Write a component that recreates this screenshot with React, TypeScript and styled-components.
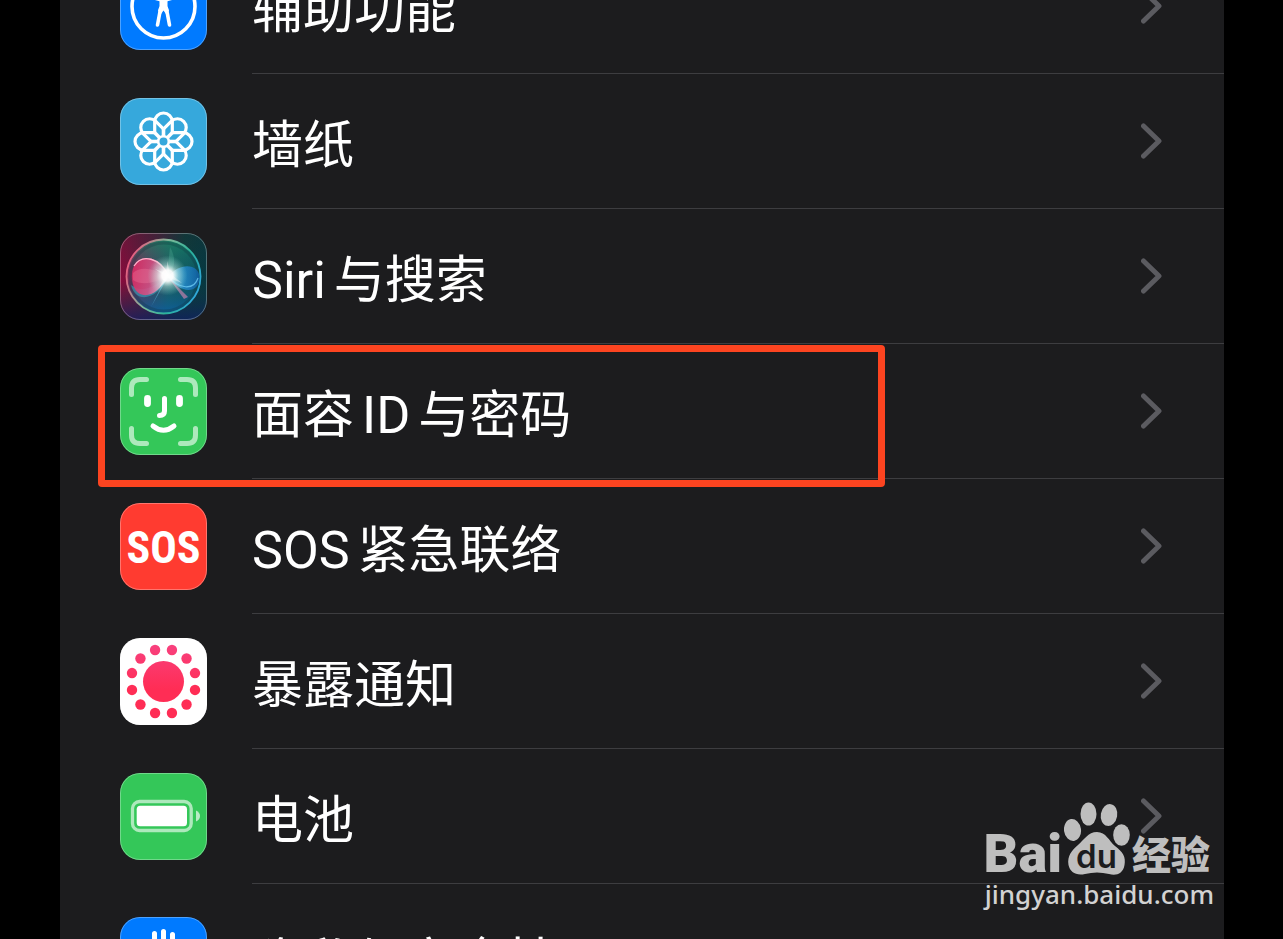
import React from "react";
import styled, { createGlobalStyle } from "styled-components";

const GlobalStyle = createGlobalStyle`
  *, *::before, *::after { box-sizing: border-box; }
  body { margin: 0; background: #000; }
`;

const Screen = styled.main`
  position: relative;
  height: 100vh;
  overflow: hidden;
  padding: 0 59px 0 60px;
  background: #000;
  font-family: Roboto, "Noto Sans CJK SC", sans-serif;
`;

const Panel = styled.nav`
  position: relative;
  min-height: 100%;
  background: #1c1c1e;
`;

const List = styled.ul`
  list-style: none;
  margin: -61px 0 0;
  padding: 0;
`;

const Item = styled.li<{ $tall?: boolean }>`
  position: relative;
  display: flex;
  height: ${(p) => (p.$tall ? 153 : 135)}px;
`;

const RowLink = styled.a`
  flex: 1;
  display: flex;
  align-items: center;
  gap: 45px;
  padding-left: 60px;
  color: #fff;
  text-decoration: none;
`;

const IconSvg = styled.svg`
  flex: none;
  display: block;
  width: 87px;
  height: 87px;
`;

const RowBody = styled.span`
  flex: 1;
  align-self: stretch;
  display: flex;
  align-items: center;
  justify-content: space-between;
  padding-right: 61px;
  border-bottom: 1px solid #3d3d40;
`;

const Label = styled.span<{ $tall?: boolean }>`
  display: flex;
  align-items: baseline;
  gap: 8px;
  padding-top: ${(p) => (p.$tall ? 6 : 10)}px;
  font-size: 51px;
  line-height: 64px;
  white-space: nowrap;
`;

const Latin = styled.span`
  font-size: 52px;
`;

const ChevronSvg = styled.svg`
  flex: none;
  width: 22px;
  height: 36px;
`;

const Highlight = styled.span`
  position: absolute;
  top: 1px;
  bottom: -8px;
  left: 38px;
  right: 339px;
  border: 7px solid #fc4420;
  border-radius: 4px;
  pointer-events: none;
`;

const Watermark = styled.div`
  position: absolute;
  right: 69px;
  bottom: 27px;
  display: flex;
  flex-direction: column;
  align-items: flex-end;
  color: #bebebe;
`;

const Brand = styled.div`
  display: flex;
  align-items: flex-end;
  gap: 2px;
  padding-right: 4px;
`;

const BrandLatin = styled.span`
  font: 900 54px/44px Roboto, sans-serif;
`;

const BrandHan = styled.span`
  padding-bottom: 4px;
  font: 900 39px/40px "Noto Sans CJK SC", sans-serif;
`;

const PawSvg = styled.svg`
  width: 66px;
  height: 74px;
`;

const Site = styled.span`
  color: #d2d2d2;
  font: 500 26px/36px "Noto Sans", sans-serif;
`;

function Tile({ fill, edge = 0.3, children }: { fill: string; edge?: number; children: React.ReactNode }) {
  return (
    <IconSvg viewBox="0 0 87 87" aria-hidden="true">
      <rect width="87" height="87" rx="20" fill={fill} />
      {children}
      <rect x="0.5" y="0.5" width="86" height="86" rx="19.5" fill="none" stroke="#fff" strokeOpacity={edge} />
    </IconSvg>
  );
}

const AccessibilityIcon = () => (
  <Tile fill="#007aff">
    <circle cx="43.5" cy="43.5" r="31.5" fill="none" stroke="#fff" strokeWidth="3.6" />
    <circle cx="43.5" cy="24" r="4.5" fill="#fff" />
    <path d="M27 33L40 36.500H47L60 33" fill="none" stroke="#fff" strokeWidth="3.6" strokeLinecap="round" strokeLinejoin="round" />
    <path d="M39.500 35H47.500V43L49 48L46 51L43.500 47.500L41 51L38 48L39.500 43Z" fill="#fff" />
    <path d="M40.500 46L37.500 62M46.500 46L49.500 62" fill="none" stroke="#fff" strokeWidth="3.600" strokeLinecap="round" />
  </Tile>
);

const WallpaperIcon = () => (
  <Tile fill="#36a8dc">
    <g transform="translate(43.500 43.500)" fill="none" stroke="#fff" strokeWidth="3.200" strokeLinejoin="round">
      {[0, 45, 90, 135, 180, 225, 270, 315].map((a) => (
        <g key={a} transform={`rotate(${a})`}>
          <path d="M8.800 -9V-19.700A8.800 8.800 0 0 0 -8.800 -19.700V-9" />
          <path d="M0 -13V-5" strokeWidth="3.600" />
        </g>
      ))}
      <circle r="5.300" strokeWidth="2.600" />
    </g>
  </Tile>
);

const SiriIcon = () => (
  <IconSvg viewBox="0 0 87 87" aria-hidden="true">
    <defs>
      <linearGradient id="siriBase" x1="0" y1="0.4" x2="1" y2="0.5">
        <stop offset="0" stopColor="#8c0a3c" />
        <stop offset="0.35" stopColor="#561a3c" />
        <stop offset="0.7" stopColor="#0e3a3c" />
        <stop offset="1" stopColor="#053842" />
      </linearGradient>
      <linearGradient id="siriDown" x1="0" y1="0" x2="0" y2="1">
        <stop offset="0" stopColor="#1d2f30" stopOpacity="0.3" />
        <stop offset="0.55" stopColor="#17393a" stopOpacity="0" />
        <stop offset="1" stopColor="#101f60" stopOpacity="0.8" />
      </linearGradient>
      <linearGradient id="siriOrb" x1="0" y1="0.4" x2="1" y2="0.5">
        <stop offset="0" stopColor="#a01f54" />
        <stop offset="0.35" stopColor="#4f4d62" />
        <stop offset="0.6" stopColor="#1d6a66" />
        <stop offset="1" stopColor="#075560" />
      </linearGradient>
      <linearGradient id="siriOrbDown" x1="0" y1="0" x2="0" y2="1">
        <stop offset="0" stopColor="#168a62" stopOpacity="0.65" />
        <stop offset="0.5" stopColor="#12465a" stopOpacity="0.1" />
        <stop offset="1" stopColor="#0a5da5" stopOpacity="0.85" />
      </linearGradient>
      <linearGradient id="siriRing" x1="0" y1="0.3" x2="1" y2="0.7">
        <stop offset="0" stopColor="#f0567e" />
        <stop offset="0.4" stopColor="#7fb99a" />
        <stop offset="0.7" stopColor="#2bb29a" />
        <stop offset="1" stopColor="#30a6e0" />
      </linearGradient>
      <linearGradient id="siriPink" x1="0" y1="0" x2="1" y2="0.2">
        <stop offset="0" stopColor="#e0255e" />
        <stop offset="0.6" stopColor="#dc4f85" />
        <stop offset="1" stopColor="#f6c4d8" />
      </linearGradient>
      <linearGradient id="siriBlue" x1="0" y1="0" x2="1" y2="0">
        <stop offset="0" stopColor="#b5ecff" />
        <stop offset="0.5" stopColor="#2895df" />
        <stop offset="1" stopColor="#1263b8" />
      </linearGradient>
      <radialGradient id="siriGlow">
        <stop offset="0" stopColor="#fff" />
        <stop offset="0.28" stopColor="#fff" stopOpacity="0.95" />
        <stop offset="0.55" stopColor="#cff6ee" stopOpacity="0.45" />
        <stop offset="1" stopColor="#9fe8dc" stopOpacity="0" />
      </radialGradient>
    </defs>
    <rect width="87" height="87" rx="20" fill="url(#siriBase)" />
    <rect width="87" height="87" rx="20" fill="url(#siriDown)" />
    <circle cx="43.5" cy="43.5" r="37" fill="url(#siriOrb)" />
    <circle cx="43.5" cy="43.5" r="37" fill="url(#siriOrbDown)" />
    <circle cx="44" cy="44" r="34" fill="none" stroke="#12343f" strokeOpacity="0.3" strokeWidth="3" />
    <circle cx="43.5" cy="43.5" r="37" fill="none" stroke="url(#siriRing)" strokeWidth="1.800" />
    <path d="M11 52C16 72 38 66 48 44C30 56 22 60 11 52Z" fill="#3ba1bb" opacity="0.6" />
    <path d="M48 43C38 18 12 20 12 43C12 69 36 68 48 43Z" fill="url(#siriPink)" opacity="0.85" />
    <path d="M13 40C22 31 39 38 48 43C35 50 22 53 13 47Z" fill="#f586a4" opacity="0.3" />
    <path d="M14 33C22 20 40 25 48 42" fill="none" stroke="#ffb3cb" strokeWidth="1.300" />
    <path d="M48 44C60 28 80 31 79.500 45C79 62 59 60 48 44Z" fill="url(#siriBlue)" opacity="0.7" />
    <path d="M48 43C58 56 74 58 78 45" fill="none" stroke="#79d7ff" strokeWidth="1.200" opacity="0.7" />
    <path d="M45 46L31 74L39 60L47 46Z" fill="#65c5ee" opacity="0.5" />
    <path d="M48 44L68 64L64 66Z" fill="#e187b5" opacity="0.6" />
    <path d="M47 43L50 14C56 25 56 35 47 43Z" fill="#6cd7b4" opacity="0.2" />
    <circle cx="47.500" cy="42.500" r="20" fill="url(#siriGlow)" />
    <path d="M47.500 28L49.500 40L62 50L49 45L39 55L45 43L35 36L46 40Z" fill="#fff" opacity="0.4" />
    <rect x="0.5" y="0.5" width="86" height="86" rx="19.5" fill="none" stroke="#fff" strokeOpacity="0.3" />
  </IconSvg>
);

const FaceIdIcon = () => (
  <Tile fill="#34c759">
    <g fill="none" stroke="#fff" strokeWidth="5" strokeLinecap="round">
      <path strokeOpacity="0.6" d="M11.500 26.500V20Q11.500 11.500 20 11.500H26.500M60.500 11.500H67Q75.500 11.500 75.500 20V26.500M75.500 60.500V67Q75.500 75.500 67 75.500H60.500M26.500 75.500H20Q11.500 75.500 11.500 67V60.500" />
      <path strokeWidth="6.800" d="M27.500 30.500V35.500M59.500 30.500V35.500" />
      <path strokeWidth="5" d="M44.500 30.500V43Q44.500 47.500 39.500 47.500" />
      <path d="M33 58Q43.500 66.500 54 58" />
    </g>
  </Tile>
);

const SosText = styled.text`
  font-family: "Roboto Condensed", Roboto, sans-serif;
  font-size: 44px;
  font-weight: 700;
`;

const SosIcon = () => (
  <Tile fill="#ff3b30">
    <SosText x="43.5" y="60" textAnchor="middle" fill="#fff">SOS</SosText>
  </Tile>
);

const ExposureIcon = () => (
  <Tile fill="#fff">
    <defs>
      <linearGradient id="exposure" gradientUnits="userSpaceOnUse" x1="0" y1="6" x2="0" y2="81">
        <stop offset="0" stopColor="#f8417f" />
        <stop offset="0.6" stopColor="#ff2d55" />
      </linearGradient>
    </defs>
    <g fill="url(#exposure)">
      <circle cx="43.5" cy="43.5" r="20.500" />
      {Array.from({ length: 12 }, (_, i) => {
        const a = ((i * 30 + 15) * Math.PI) / 180;
        return <circle key={i} cx={43.5 + 32.6 * Math.cos(a)} cy={43.5 + 32.6 * Math.sin(a)} r="5.200" />;
      })}
    </g>
  </Tile>
);

const BatteryIcon = () => (
  <Tile fill="#34c759">
    <rect x="12.500" y="28.500" width="58.700" height="29" rx="7" fill="none" stroke="#fff" strokeOpacity="0.6" strokeWidth="3.300" />
    <rect x="16.700" y="32.700" width="50.300" height="20.600" rx="3.500" fill="#fff" />
    <path d="M76 37.500Q80 39.500 80 43T76 48.500Z" fill="#fff" fillOpacity="0.65" />
  </Tile>
);

const PrivacyIcon = () => (
  <Tile fill="#007aff">
    <path d="M34.500 16.500V40M43.500 14.500V40M52.500 17.500V40M61 26V46" fill="none" stroke="#fff" strokeWidth="5" strokeLinecap="round" />
    <path d="M32 38H63.500V52Q62 70 47 71Q36 70 31 60L23 46Q26 41 32 47Z" fill="#fff" />
  </Tile>
);

const Chevron = () => (
  <ChevronSvg viewBox="0 0 22 36" aria-hidden="true">
    <path d="M2.500 3L18 18L2.500 33" fill="none" stroke="#5b5b60" strokeWidth="5" strokeLinecap="round" strokeLinejoin="round" />
  </ChevronSvg>
);

const PawText = styled.text`
  font-family: Inter, sans-serif;
  font-size: 33px;
  font-weight: 600;
`;

const Paw = () => (
  <PawSvg viewBox="2 0 66 74" aria-hidden="true">
    <g fill="currentColor">
      <ellipse cx="10.500" cy="28" rx="8.500" ry="11" transform="rotate(-8 10.500 28)" />
      <ellipse cx="26.500" cy="12" rx="8" ry="11.500" />
      <ellipse cx="47" cy="13" rx="8.200" ry="11" transform="rotate(10 47 13)" />
      <ellipse cx="59.500" cy="33" rx="8.300" ry="10.800" />
      <path d="M35 30C44 30 47 39 53 44C61 50 64 55 62.500 63C61 72 54 74 47 72Q35 69 23 72C14 74 8 70 6.500 63C5 54 10 48 16 43C22 38 26 30 35 30Z" />
    </g>
    <PawText x="34.500" y="66" textAnchor="middle" fill="#1c1c1e">du</PawText>
  </PawSvg>
);

const rows: { label: string; icon: React.ReactNode; marked?: boolean; tall?: boolean }[] = [
  { label: "辅助功能", icon: <AccessibilityIcon /> },
  { label: "墙纸", icon: <WallpaperIcon /> },
  { label: "Siri与搜索", icon: <SiriIcon /> },
  { label: "面容ID与密码", icon: <FaceIdIcon />, marked: true },
  { label: "SOS紧急联络", icon: <SosIcon /> },
  { label: "暴露通知", icon: <ExposureIcon /> },
  { label: "电池", icon: <BatteryIcon /> },
  { label: "隐私与安全性", icon: <PrivacyIcon />, tall: true },
];

const splitScripts = (label: string) => label.match(/[A-Za-z]+|[^A-Za-z]+/g) ?? [];

export default function App() {
  return (
    <Screen>
      <GlobalStyle />
      <Panel>
        <List>
          {rows.map((row) => (
            <Item key={row.label} $tall={row.tall}>
              <RowLink href="#">
                {row.icon}
                <RowBody>
                  <Label $tall={row.tall}>
                    {splitScripts(row.label).map((part) =>
                      /[A-Za-z]/.test(part) ? <Latin key={part}>{part}</Latin> : <span key={part}>{part}</span>
                    )}
                  </Label>
                  <Chevron />
                </RowBody>
              </RowLink>
              {row.marked && <Highlight />}
            </Item>
          ))}
        </List>
      </Panel>
      <Watermark>
        <Brand>
          <BrandLatin>Bai</BrandLatin>
          <Paw />
          <BrandHan>经验</BrandHan>
        </Brand>
        <Site>jingyan.baidu.com</Site>
      </Watermark>
    </Screen>
  );
}
